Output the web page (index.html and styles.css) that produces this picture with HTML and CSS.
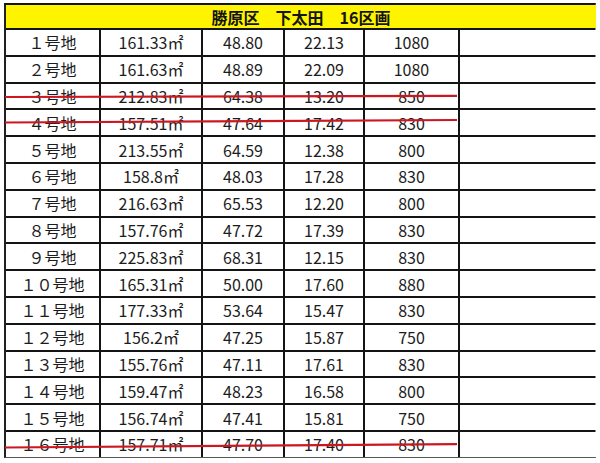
FILE: index.html
```html
<!DOCTYPE html>
<html lang="ja">
<head>
<meta charset="utf-8">
<title>勝原区 下太田 16区画</title>
<link rel="stylesheet" href="styles.css">
</head>
<body>
<div class="page">
  <div class="sheet">
    <div class="title">勝原区　下太田　16区画</div>

    <div class="c">１号地</div><div class="c">161.33㎡</div><div class="c">48.80</div><div class="c">22.13</div><div class="c">1080</div><div class="c"></div>
    <div class="c">２号地</div><div class="c">161.63㎡</div><div class="c">48.89</div><div class="c">22.09</div><div class="c">1080</div><div class="c"></div>
    <div class="c">３号地</div><div class="c">212.83㎡</div><div class="c">64.38</div><div class="c">13.20</div><div class="c">850</div><div class="c"></div>
    <div class="c">４号地</div><div class="c">157.51㎡</div><div class="c">47.64</div><div class="c">17.42</div><div class="c">830</div><div class="c"></div>
    <div class="c">５号地</div><div class="c">213.55㎡</div><div class="c">64.59</div><div class="c">12.38</div><div class="c">800</div><div class="c"></div>
    <div class="c">６号地</div><div class="c">158.8㎡</div><div class="c">48.03</div><div class="c">17.28</div><div class="c">830</div><div class="c"></div>
    <div class="c">７号地</div><div class="c">216.63㎡</div><div class="c">65.53</div><div class="c">12.20</div><div class="c">800</div><div class="c"></div>
    <div class="c">８号地</div><div class="c">157.76㎡</div><div class="c">47.72</div><div class="c">17.39</div><div class="c">830</div><div class="c"></div>
    <div class="c">９号地</div><div class="c">225.83㎡</div><div class="c">68.31</div><div class="c">12.15</div><div class="c">830</div><div class="c"></div>
    <div class="c">１０号地</div><div class="c">165.31㎡</div><div class="c">50.00</div><div class="c">17.60</div><div class="c">880</div><div class="c"></div>
    <div class="c">１１号地</div><div class="c">177.33㎡</div><div class="c">53.64</div><div class="c">15.47</div><div class="c">830</div><div class="c"></div>
    <div class="c">１２号地</div><div class="c">156.2㎡</div><div class="c">47.25</div><div class="c">15.87</div><div class="c">750</div><div class="c"></div>
    <div class="c">１３号地</div><div class="c">155.76㎡</div><div class="c">47.11</div><div class="c">17.61</div><div class="c">830</div><div class="c"></div>
    <div class="c">１４号地</div><div class="c">159.47㎡</div><div class="c">48.23</div><div class="c">16.58</div><div class="c">800</div><div class="c"></div>
    <div class="c">１５号地</div><div class="c">156.74㎡</div><div class="c">47.41</div><div class="c">15.81</div><div class="c">750</div><div class="c"></div>
    <div class="c">１６号地</div><div class="c">157.71㎡</div><div class="c">47.70</div><div class="c">17.40</div><div class="c">830</div><div class="c"></div>
  </div>

  <svg class="strikes" width="600" height="463" viewBox="0 0 600 463" aria-hidden="true">
    <line x1="5" y1="97" x2="457" y2="95.8"/>
    <line x1="5" y1="122.5" x2="457" y2="120"/>
    <line x1="5" y1="447.5" x2="457" y2="444.2"/>
  </svg>
</div>
</body>
</html>
```

FILE: styles.css
```css
html, body {
  margin: 0;
  padding: 0;
  background: #ffffff;
}

.page {
  position: relative;
  width: 600px;
  height: 463px;
  overflow: hidden;
}

.sheet {
  margin: 3px 0 0 4px;
  width: 592px;
  box-sizing: border-box;
  display: grid;
  grid-template-columns: 93px 100px 80px 78px 93px 136px;
  grid-template-rows: 23px repeat(16, 24.8px);
  gap: 2px;
  background: #141414;
  border-top: 2px solid #141414;
  border-left: 2px solid #202020;
  border-right: 1px solid #8a8a8a;
  border-bottom: 1px solid #555555;
  font-family: "Noto Sans CJK JP", "Noto Sans", sans-serif;
  color: #1c1c1c;
}

.title {
  grid-column: 1 / -1;
  background: #fff400;
  display: flex;
  align-items: center;
  justify-content: center;
  font-size: 16px;
  font-weight: bold;
  color: #141414;
  line-height: 1;
}

.c {
  background: #ffffff;
  display: flex;
  align-items: center;
  justify-content: center;
  font-size: 16px;
  line-height: 1;
  white-space: nowrap;
}

.strikes {
  position: absolute;
  top: 0;
  left: 0;
  pointer-events: none;
}

.strikes line {
  stroke: #cc1620;
  stroke-width: 2.2;
}
```
